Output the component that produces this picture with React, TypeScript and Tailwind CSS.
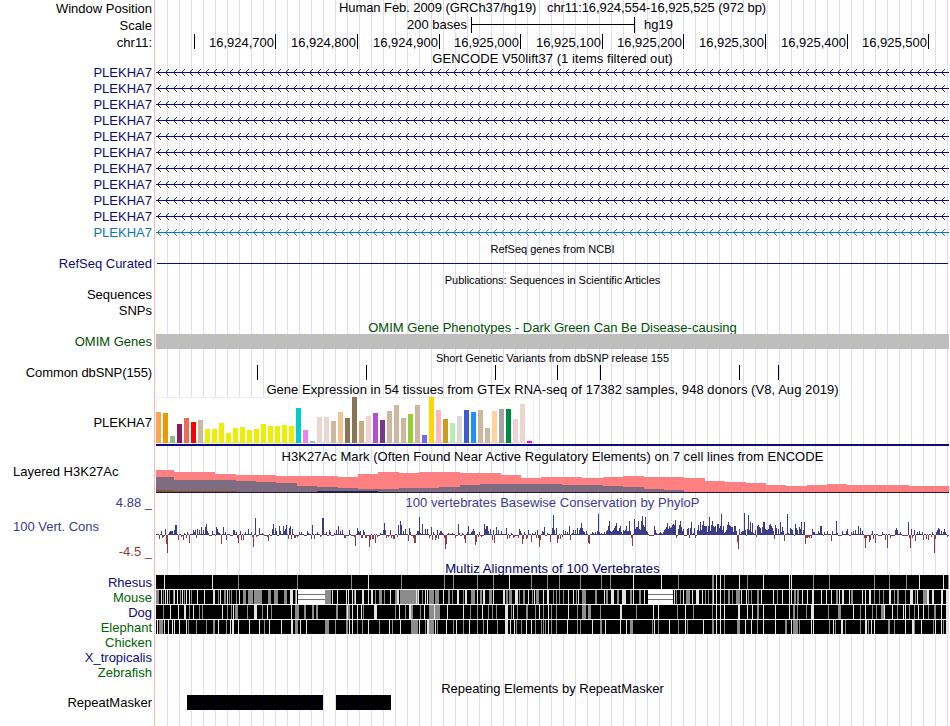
import React from "react";

const NAVY = "#0c0c78";
const GENE_ROWS = 11;

// x + height of every signal peak, in image pixels
const PHYLOP =
  "159,-4 161,4 162,-3 163,-2 165,6 166,-9 167,-18 169,3 170,4 171,4 172,4 174,5 175,10 176,10 178,-5 181,-2 183,-5 184,2 186,-3 187,3 189,-8 193,5 194,3 195,5 196,-3 197,6 199,5 201,8 203,5 205,8 206,11 207,4 208,2 209,-1 210,-1 212,4 215,-1 216,8 217,6 218,3 219,2 221,-9 223,8 225,3 226,-5 230,-1 233,5 234,5 236,3 237,-3 238,-8 240,4 241,-5 243,-5 245,3 248,6 251,3 252,-2 253,-12 255,17 256,-2 259,7 262,2 264,-1 267,-2 268,-6 270,-1 272,6 273,11 275,7 276,4 277,-1 279,9 280,4 283,9 284,4 285,6 286,10 288,-4 289,7 290,9 291,-4 292,6 294,-3 295,-3 297,-2 299,3 301,3 304,-1 307,4 308,2 311,-4 312,10 314,-4 317,3 320,-2 322,17 323,17 326,3 327,-1 329,5 330,3 331,-1 334,2 336,5 338,9 340,4 342,5 344,-3 345,-3 349,5 351,-1 354,-2 355,-11 357,7 358,4 359,3 360,4 361,-3 362,-3 363,5 364,3 365,-3 366,-3 369,-12 370,-5 372,-4 373,-4 375,-8 377,-2 380,2 383,5 384,12 385,5 386,-3 388,-2 390,5 391,-3 393,-4 394,-4 397,-2 398,10 400,14 401,10 403,4 405,6 408,-6 409,7 410,3 411,-1 413,-3 414,-8 415,-8 417,4 418,4 419,18 420,2 422,11 425,6 427,6 429,-3 431,8 432,-5 433,3 435,-5 436,-3 437,5 438,-4 439,2 440,4 441,4 442,2 444,-3 445,-14 446,-9 448,2 452,2 455,-3 456,-1 458,11 459,2 460,-1 462,2 464,-4 465,-8 467,3 468,9 471,3 472,4 473,6 474,4 475,-10 476,-7 478,-2 479,3 480,-1 481,-2 484,11 485,6 486,9 487,9 488,4 490,6 492,-5 493,5 494,-8 496,8 498,5 501,4 506,7 507,-4 509,-3 511,2 513,-3 514,-2 518,-3 519,6 520,4 521,2 522,-9 523,-4 524,3 526,-4 527,-3 528,5 531,-7 532,2 535,3 536,-3 537,5 538,-3 539,-12 540,-5 542,4 543,3 544,8 545,-1 547,2 550,-7 552,7 553,20 554,5 556,7 557,-8 558,-4 560,-4 562,-2 563,5 565,4 567,3 569,9 570,-5 572,2 573,5 575,5 577,7 579,5 580,7 581,12 582,7 583,4 584,3 586,4 588,-8 589,-9 592,3 593,2 595,3 597,4 598,21 599,3 601,2 604,3 606,4 607,5 608,9 609,14 610,4 611,3 612,4 613,5 614,7 615,9 616,12 617,4 618,4 619,7 620,9 621,3 623,5 624,4 625,5 626,9 627,4 628,4 629,14 630,4 631,-3 632,-11 634,16 635,6 636,8 637,8 638,14 639,6 640,5 641,14 642,19 643,10 644,8 645,18 646,4 647,3 649,-1 653,-1 654,9 655,5 656,2 659,2 660,3 661,2 663,3 664,5 665,6 666,8 667,12 668,6 669,9 670,7 671,8 672,10 673,11 674,10 675,15 676,-3 678,6 679,10 680,14 681,8 682,4 683,6 684,-1 687,6 688,7 689,-3 690,7 691,13 693,2 694,7 695,-3 697,5 698,10 699,4 700,13 701,5 702,10 703,14 704,9 705,9 706,9 707,3 708,9 709,18 710,4 711,10 712,14 713,9 714,8 715,9 716,3 717,11 718,11 719,7 720,9 721,21 722,5 723,9 724,2 725,3 726,5 727,10 728,13 729,10 730,9 731,8 732,8 733,3 734,9 735,9 736,4 737,-7 738,-14 739,6 741,3 742,4 743,4 744,22 745,5 746,-1 747,6 748,20 749,5 750,13 751,3 752,12 753,2 755,5 756,-2 757,9 758,10 759,8 760,7 761,2 762,8 763,13 764,13 765,6 766,5 767,5 768,6 769,10 770,11 771,9 772,7 773,4 774,-4 775,10 776,7 778,6 780,13 781,3 782,8 783,4 784,-6 787,21 788,2 790,7 791,6 792,5 794,-1 795,11 796,7 797,5 799,8 800,6 801,13 803,5 804,13 805,-9 806,-3 807,-3 808,-2 809,-3 811,-3 812,6 813,3 814,3 818,4 819,2 820,9 821,9 823,-1 824,3 827,4 831,-6 832,4 836,14 837,2 838,-1 842,4 846,4 847,6 849,-1 851,3 853,4 855,5 858,9 860,7 862,4 864,-3 865,-13 866,-3 869,-7 870,-5 872,4 873,-4 875,-8 878,-1 882,3 885,-5 887,-13 890,-3 895,5 896,7 897,5 900,3 902,-1 905,-1 908,13 909,-3 910,-13 911,6 912,-3 914,5 915,-6 917,3 919,4 922,3 923,-5 926,-4 928,-5 931,-2 932,3 934,-18 935,-4 936,3 937,5 938,7 939,6 941,4 943,3 944,6 945,3 947,-2";

const parsePairs = (text: string) =>
  text.split(" ").map((pair) => pair.split(",").map(Number));

const fillSignal = () => {
  const peaks = new Map(parsePairs(PHYLOP).map(([x, h]) => [x, h]));
  const bars: number[][] = [];
  let sign = 1;
  for (let x = 156; x < 949; x++) {
    const h = peaks.get(x);
    if (h !== undefined) sign = h < 0 && h > -4 ? -1 : 1;
    bars.push([x, h ?? sign]);
  }
  return bars;
};

interface Alignment {
  name: string;
  color: string;
  light: string;
  gray: string;
  gaps?: number[][];
}

// "x" is a one pixel stripe, "x,w" is a wider one
const ALIGNMENTS: Alignment[] = [
  {
    name: "Rhesus",
    color: "text-[#0c0c78]",
    light: "164 212 368 509 633 661 716 720 739 763 789 791 919 943",
    gray: "238 297 351 401 444 453 477 493 531 547 559 580 601 610 678 712,2 724 747 813 829 874 889 906 948",
  },
  {
    name: "Mouse",
    color: "text-[#006400]",
    light:
      "161 165 167 174 177 182 186 189 197 204 213,2 220 227 239 290,3 296 332 337 346 348 352 355 362,2 368 371,2 390 397,2 416 418 425 427 443 457,2 465,2 477 483,2 493 503,2 515,3 528 534 543 547,2 568 573 578 604 611,3 622,4 633 644 674 683 692 696,3 702 713 716 720 741 746 761 773 782 789 791 802 807 812,2 821 826 831 839 842,2 849 862 865 869,2 889,2 910,3 917 927,2 932,2 941,2 946,3",
    gray: "156,3 163 169 173 180 184 191 218 224,2 229 231 236 243,3 248,5 254,8 268,3 274,4 284,3 295 325,6 354 375 379,3 384 395,2 400,15 415,2 417 422 429,5 435,4 448,2 452 463 471,4 480,2 489,3 506,2 509,3 519 523,2 532 536,3 553 556 559 563 576 582,4 595,2 606,2 617,2 630,2 639,2 676 680 686,4 705 708 712 724 728,2 732 736,4 748 751 757,2 777 794,2 797,2 836,2 851,2 874 879 883 894 897,2 905 915 923,4",
    gaps: [
      [298, 27],
      [648, 25],
    ],
  },
  {
    name: "Dog",
    color: "text-[#0c0c78]",
    light:
      "170 178 184,2 193 222 233 254,3 267 291 347 352 357 361 374,3 399 409,2 424 434 447 463 482 505,2 507 513 539 548 568 620,2 653 658 685 716 720 724 738,2 747 752 763 775 789 811,3 853 865 884 892 903 905 918 923 941 946,3",
    gray: "163 189 199 202 227 231 235,3 247 262 271 295,4 304,2 312,2 316,2 336,2 346,4 363 395 405 411,2 420 429,5 435,5 470 477 488 492 496 511 517 526,2 535 543 551 556 577 582,4 588,3 600 636 677 693 712 757,2 793,2 797 806 828 838,3 860 872 876 881,3 897 909 914 928 934,2",
  },
  {
    name: "Elephant",
    color: "text-[#006400]",
    light:
      "157 164 168 172 174 179 186 218 230 232,2 238 249 259 269 281 291,2 300 306 349 352 368 389 400 419 427,2 435 446 456 469 487 505,2 507 510 514 526 531 548 567 592 605 620 626 654 669 685 703 716 720 745 751 763 775 791 811 813 833 841,2 865,2 871 874 905 912,2 921 935 941 946,3",
    gray: "159,4 188 196 206 213,2 226 264 295,3 325,4 335 346,2 357 362 379 392 411,7 415,3 425 429,5 437 453 463 477 483 497 516 521 535 541 543 545 551 556 577 580 600,2 630,3 652 658 678 687 712,2 724 737,3 757 785,2 793,4 797 799 829 835 845 860 868 888,2 894 914 933 943",
  },
];

const GTEX = [
  ["#ffa54f", 31], ["#ee9a00", 30], ["#8fbc8f", 7], ["#8b1c62", 19], ["#ee6a50", 25], ["#ff0000", 21],
  ["#cdb79e", 23], ["#eeee00", 14], ["#eeee00", 14], ["#eeee00", 20], ["#eeee00", 10], ["#eeee00", 15],
  ["#eeee00", 16], ["#eeee00", 13], ["#eeee00", 14], ["#eeee00", 19], ["#eeee00", 17], ["#eeee00", 17],
  ["#eeee00", 18], ["#eeee00", 17], ["#00cdcd", 35], ["#ee82ee", 13], ["#9ac0cd", 2], ["#eed5d2", 26],
  ["#eed5d2", 26], ["#cdb79e", 22], ["#eec591", 31], ["#8b7355", 25], ["#8b7355", 46], ["#cdaa7d", 22],
  ["#eed5d2", 27], ["#b452cd", 30], ["#7a378b", 23], ["#cdb79e", 32], ["#cdb79e", 38], ["#cdb79e", 25],
  ["#9acd32", 29], ["#cdb79e", 38], ["#7a67ee", 8], ["#ffd700", 46], ["#ffb6c1", 33], ["#cd9b1d", 24],
  ["#b4eeb4", 20], ["#d9d9d9", 27], ["#3a5fcd", 33], ["#1e90ff", 31], ["#cdb79e", 33], ["#cdb79e", 15],
  ["#ffd39b", 32], ["#a6a6a6", 34], ["#008b45", 34], ["#eed5d2", 24], ["#eed5d2", 39], ["#ff00ff", 2],
] as [string, number][];

// [start x, height above the track floor]
const H3K_RED = [
  [156, 22], [174, 20], [215, 18], [236, 17], [276, 16], [338, 15], [358, 18], [378, 20], [399, 19],
  [419, 20], [460, 19], [501, 17], [521, 14], [541, 15], [582, 14], [603, 15], [623, 16], [644, 15],
  [684, 14], [705, 11], [725, 10], [746, 9], [766, 7], [786, 6], [807, 7], [827, 8], [847, 7], [909, 6],
];
const H3K_GRAY = [
  [156, 15], [174, 12], [236, 11], [256, 10], [276, 9], [297, 6], [317, 5], [338, 4], [358, 3],
  [399, 4], [439, 5], [460, 7], [480, 8], [562, 7], [603, 6], [623, 5], [644, 3], [664, 2], [684, 0],
];

const RULER = [
  [81, "16,924,700"], [82, "16,924,800"], [82, "16,924,900"], [81, "16,925,000"], [82, "16,925,100"],
  [81, "16,925,200"], [82, "16,925,300"], [82, "16,925,400"], [81, "16,925,500"],
] as [number, string][];

const SNPS = [257, 366, 495, 557, 600, 739, 778];

interface RowProps {
  label?: React.ReactNode;
  labelClass?: string;
  height: string;
  children?: React.ReactNode;
}

const Row = ({ label, labelClass = "", height, children }: RowProps) => (
  <div className={`flex shrink-0 ${height}`}>
    <div className={`flex w-[155px] shrink-0 items-center justify-end border-r border-[#ffb4b4] pr-[2px] whitespace-pre ${labelClass}`}>
      {label}
    </div>
    <div className="min-w-0 flex-1">{children}</div>
  </div>
);

const Title = ({ height, className = "", children }: { height: string; className?: string; children: string }) => (
  <Row height={height}>
    <div className={`flex h-full items-center justify-center whitespace-pre ${className}`}>{children}</div>
  </Row>
);

// Track drawings share the x axis of the whole image
const Track = ({ height, children }: { height: number; children: React.ReactNode }) => (
  <svg width={795} height={height} viewBox={`155 0 795 ${height}`} shapeRendering="crispEdges" className="block">
    {children}
  </svg>
);

const GeneLine = ({ color }: { color: string }) => {
  let arrows = "";
  for (let x = 157; x < 946; x += 8) arrows += `M${x + 4} 5l-3.5 3.5l3.5 3.5`;
  return (
    <Track height={16}>
      <rect x={156} y={8} width={793} height={1} fill={color} />
      <path d={arrows} fill="none" stroke={color} strokeWidth={0.9} shapeRendering="auto" />
    </Track>
  );
};

const Steps = ({ steps, fill }: { steps: number[][]; fill: string }) => (
  <>
    {steps.map(([x, h], i) => (
      <rect key={x} x={x} y={28 - h} width={(steps[i + 1]?.[0] ?? 949) - x} height={h} fill={fill} />
    ))}
  </>
);

const Stripes = ({ data, fill }: { data: string; fill: string }) => (
  <>
    {parsePairs(data).map(([x, w = 1]) => (
      <rect key={x} x={x} y={0} width={w} height={14} fill={fill} />
    ))}
  </>
);

const App = () => {
  return (
    <div className="relative h-[726px] w-[950px] overflow-hidden bg-white font-['Liberation_Sans',sans-serif] text-[13px] leading-[15px] text-black">
      <div className="absolute inset-y-0 right-px left-[156px] bg-[linear-gradient(to_right,transparent_11px,#dcdcff_11px)] bg-size-[12px_100%]" />
      <div className="relative flex h-full flex-col">
        <Row height="h-[16px]" label="Window Position">
          <div className="flex h-full items-center justify-center pb-[2px] tracking-[-0.07px] whitespace-pre">
            {"Human Feb. 2009 (GRCh37/hg19)   chr11:16,924,554-16,925,525 (972 bp)"}
          </div>
        </Row>
        <Row height="h-[18px]" label="Scale">
          <div className="flex h-full items-center">
            <span className="w-[312px] pb-[2px] text-right">200 bases</span>
            <div className="ml-1 flex h-4 w-[164px] items-center border-x border-black">
              <div className="mb-px h-px w-full bg-black" />
            </div>
            <span className="ml-[9px] pb-[2px]">hg19</span>
          </div>
        </Row>
        <Row height="h-[17px]" label="chr11:">
          <div className="flex h-[15px]">
            <div className="w-10 border-r border-black" />
            {RULER.map(([width, text]) => (
              <div key={text} className="border-r border-black pt-px pr-px text-right" style={{ width }}>
                {text}
              </div>
            ))}
          </div>
        </Row>
        <Title height="h-[13px]" className="pt-[2px] tracking-[0.05px]">GENCODE V50lift37 (1 items filtered out)</Title>
        {Array.from({ length: GENE_ROWS }, (_, i) => {
          const last = i === GENE_ROWS - 1;
          return (
            <Row key={i} height="h-4" label="PLEKHA7" labelClass={last ? "text-[#0c78b4]" : "text-[#0c0c78]"}>
              <GeneLine color={last ? "#0c78b4" : NAVY} />
            </Row>
          );
        })}
        <Title height="h-4" className="pt-[2px] text-[11px]">RefSeq genes from NCBI</Title>
        <Row height="h-4" label="RefSeq Curated" labelClass="pb-[2px] text-[#0c0c78]">
          <div className="mt-[7px] mr-[2px] ml-[2px] h-px bg-[#0c0c78]" />
        </Row>
        <Title height="h-[15px]" className="pt-[2px] text-[11px] tracking-[-0.05px]">Publications: Sequences in Scientific Articles</Title>
        <Row height="h-4" label="Sequences" labelClass="pb-[2px]" />
        <Row height="h-4" label="SNPs" labelClass="pb-[2px]" />
        <Title height="h-[15px]" className="pt-px text-[#005000]">
          OMIM Gene Phenotypes - Dark Green Can Be Disease-causing
        </Title>
        <Row height="h-[15px]" label="OMIM Genes" labelClass="text-[#005000]">
          <div className="mr-px ml-px h-full bg-[#bebebe]" />
        </Row>
        <Title height="h-4" className="pt-[3px] text-[11px]">Short Genetic Variants from dbSNP release 155</Title>
        <Row height="h-[15px]" label="Common dbSNP(155)" labelClass="tracking-[-0.1px]">
          <Track height={15}>
            {SNPS.map((x) => (
              <rect key={x} x={x} y={0} width={1} height={15} />
            ))}
          </Track>
        </Row>
        <Title height="h-[17px]" className="pt-[2px] tracking-[0.055px]">
          Gene Expression in 54 tissues from GTEx RNA-seq of 17382 samples, 948 donors (V8, Aug 2019)
        </Title>
        <Row height="h-[50px]" label="PLEKHA7">
          <Track height={50}>
            <rect x={156} y={0} width={378} height={47} fill="#eeeeee" />
            <rect x={157} y={1} width={376} height={45} fill="#ffffff" />
            <rect x={156} y={45} width={378} height={1} fill="#d8d8d8" />
            {GTEX.map(([fill, h], i) => (
              <rect key={i} x={156 + i * 7} y={46 - h} width={5} height={h} fill={fill} />
            ))}
            <rect x={156} y={47} width={793} height={2} fill={NAVY} />
          </Track>
        </Row>
        <Title height="h-[17px]" className="pt-px tracking-[0.05px]">
          H3K27Ac Mark (Often Found Near Active Regulatory Elements) on 7 cell lines from ENCODE
        </Title>
        <Row height="h-[31px]" label={<span className="w-full pb-[17px] pl-[13px]">Layered H3K27Ac</span>}>
          <Track height={31}>
            <Steps steps={H3K_RED} fill="#ff8080" />
            <Steps steps={H3K_GRAY} fill="#806c80" />
            <rect x={156} y={26} width={18} height={2} fill="#80582e" />
            <rect x={174} y={27} width={62} height={1} fill="#80582e" />
            <rect x={317} y={27} width={61} height={1} fill="#202860" />
            <rect x={156} y={28} width={793} height={1} fill="#28142c" />
          </Track>
        </Row>
        <Title height="h-[15px]" className="tracking-[0.04px] text-[#3c3c8c]">100 vertebrates Basewise Conservation by PhyloP</Title>
        <Row
          height="h-[51px]"
          label={
            <div className="relative h-full w-full">
              <span className="absolute -top-[15px] right-0 text-[#3c3c8c]">4.88 _</span>
              <span className="absolute top-[9px] left-[13px] text-[#3c3c8c]">100 Vert. Cons</span>
              <span className="absolute top-[34px] right-0 text-[#8c3c3c]">-4.5 _</span>
            </div>
          }
        >
          <Track height={51}>
            {fillSignal().map(([x, h]) => (
              <rect key={x} x={x} y={h > 0 ? 25 - h : 25} width={1} height={Math.abs(h)} fill={h > 0 ? "#3c3c8c" : "#8c3c3c"} />
            ))}
          </Track>
        </Row>
        <Title height="h-[14px]" className="tracking-[0.1px] text-[#000064]">Multiz Alignments of 100 Vertebrates</Title>
        {ALIGNMENTS.map(({ name, color, light, gray, gaps = [] }) => (
          <Row key={name} height="h-[15px]" label={name} labelClass={color}>
            <Track height={15}>
              <rect x={156} y={0} width={793} height={15} fill="#ffffff" />
              <rect x={156} y={0} width={793} height={14} fill="#000000" />
              <Stripes data={gray} fill="#8c8c8c" />
              <Stripes data={light} fill="#e4e4e4" />
              {gaps.map(([x, w]) => (
                <g key={x}>
                  <rect x={x} y={0} width={w} height={14} fill="#ffffff" />
                  <rect x={x} y={4} width={w} height={1} fill="#70706c" />
                  <rect x={x} y={9} width={w} height={1} fill="#70706c" />
                </g>
              ))}
            </Track>
          </Row>
        ))}
        <Row height="h-[15px]" label="Chicken" labelClass="text-[#006400]" />
        <Row height="h-[15px]" label="X_tropicalis" labelClass="text-[#0c0c78]" />
        <Row height="h-[15px]" label="Zebrafish" labelClass="text-[#006400]" />
        <Title height="h-[15px]" className="pt-px">Repeating Elements by RepeatMasker</Title>
        <Row height="h-[15px]" label="RepeatMasker">
          <div className="flex h-full">
            <div className="ml-8 w-[136px] bg-black" />
            <div className="ml-[13px] w-[55px] bg-black" />
          </div>
        </Row>
        <Row height="h-4" />
      </div>
    </div>
  );
};

export default App;
